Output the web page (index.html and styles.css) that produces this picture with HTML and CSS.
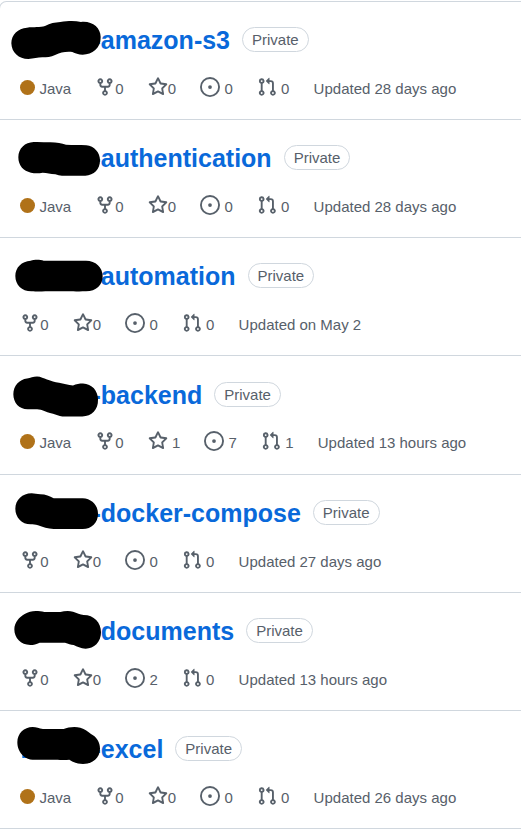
FILE: index.html
```
<!DOCTYPE html>
<html lang="en">
<head>
<meta charset="utf-8">
<title>Repositories</title>
<link rel="stylesheet" href="styles.css">
</head>
<body>
<svg class="sprite" aria-hidden="true">
  <symbol id="fork" viewBox="0 0 16 16"><path d="M5 5.372v.878c0 .414.336.75.75.75h4.5a.75.75 0 0 0 .75-.75v-.878a2.25 2.25 0 1 1 1.5 0v.878a2.25 2.25 0 0 1-2.25 2.25h-1.5v2.128a2.251 2.251 0 1 1-1.5 0V8.5h-1.5A2.25 2.25 0 0 1 3.5 6.25v-.878a2.25 2.25 0 1 1 1.5 0ZM5 3.25a.75.75 0 1 0-1.5 0 .75.75 0 0 0 1.5 0Zm6.75.75a.75.75 0 1 0 0-1.5.75.75 0 0 0 0 1.5Zm-3 8.75a.75.75 0 1 0-1.5 0 .75.75 0 0 0 1.5 0Z"/></symbol>
  <symbol id="star" viewBox="0 0 16 16"><path d="M8 .25a.75.75 0 0 1 .673.418l1.882 3.815 4.21.612a.75.75 0 0 1 .416 1.279l-3.046 2.97.719 4.192a.751.751 0 0 1-1.088.791L8 12.347l-3.766 1.98a.75.75 0 0 1-1.088-.79l.72-4.194L.818 6.374a.75.75 0 0 1 .416-1.28l4.21-.611L7.327.668A.75.75 0 0 1 8 .25Zm0 2.445L6.615 5.5a.75.75 0 0 1-.564.41l-3.097.45 2.24 2.184a.75.75 0 0 1 .216.664l-.528 3.084 2.769-1.456a.75.75 0 0 1 .698 0l2.77 1.456-.53-3.084a.75.75 0 0 1 .216-.664l2.24-2.183-3.096-.45a.75.75 0 0 1-.564-.41L8 2.694Z"/></symbol>
  <symbol id="issue" viewBox="0 0 16 16"><path d="M8 9.5a1.5 1.5 0 1 0 0-3 1.5 1.5 0 0 0 0 3Z"/><path d="M8 0a8 8 0 1 1 0 16A8 8 0 0 1 8 0ZM1.5 8a6.5 6.5 0 1 0 13 0 6.5 6.5 0 0 0-13 0Z"/></symbol>
  <symbol id="pull" viewBox="0 0 16 16"><path d="M1.5 3.25a2.25 2.25 0 1 1 3 2.122v5.256a2.251 2.251 0 1 1-1.5 0V5.372A2.25 2.25 0 0 1 1.5 3.25Zm5.677-.177L9.573.677A.25.25 0 0 1 10 .854V2.5h1A2.5 2.5 0 0 1 13.5 5v5.628a2.251 2.251 0 1 1-1.5 0V5a1 1 0 0 0-1-1h-1v1.646a.25.25 0 0 1-.427.177L7.177 3.427a.25.25 0 0 1 0-.354ZM3.75 2.5a.75.75 0 1 0 0 1.5.75.75 0 0 0 0-1.5Zm0 9.5a.75.75 0 1 0 0 1.5.75.75 0 0 0 0-1.5Zm8.25.75a.75.75 0 1 0 1.5 0 .75.75 0 0 0-1.5 0Z"/></symbol>
</svg>
<ul class="repos">
  <li class="repo">
    <svg class="mask" viewBox="-1 6 330 180"><path d="M33 130C33 103 53 85 80 83C100 80 120 83 134 78C150 70 163 67 180 66C205 62 225 62 242 66C275 62 301 83 301 111C302 144 275 164 247 164C235 164 224 160 216 156C195 154 180 158 166 164C150 171 140 172 126 172C112 173 100 176 84 177C55 177 34 158 33 130Z"/></svg>
    <h3 class="title"><a class="name"><span class="prefix">-</span>amazon-s3</a><span class="badge">Private</span></h3>
    <div class="stats"><span class="stat lang"><i class="dot"></i><span>Java</span></span><span class="stat"><svg><use href="#fork"/></svg><span>0</span></span><span class="stat"><svg><use href="#star"/></svg><span>0</span></span><span class="stat spaced"><svg><use href="#issue"/></svg><span>0</span></span><span class="stat spaced"><svg><use href="#pull"/></svg><span>0</span></span><span class="stat"><span>Updated 28 days ago</span></span></div>
  </li>
  <li class="repo">
    <svg class="mask" viewBox="-1 0 330 180"><path d="M54 112C54 85 74 67 100 66C118 65 133 67 150 67C170 67 184 70 197 74C218 76 238 74 258 76C282 78 299 98 299 121C299 149 281 166 255 167H185C178 167 172 165 165 163C150 161 140 159 127 158C115 160 103 160 92 158C69 154 54 136 54 112Z"/></svg>
    <h3 class="title"><a class="name"><span class="prefix">-</span>authentication</a><span class="badge">Private</span></h3>
    <div class="stats"><span class="stat lang"><i class="dot"></i><span>Java</span></span><span class="stat"><svg><use href="#fork"/></svg><span>0</span></span><span class="stat"><svg><use href="#star"/></svg><span>0</span></span><span class="stat spaced"><svg><use href="#issue"/></svg><span>0</span></span><span class="stat spaced"><svg><use href="#pull"/></svg><span>0</span></span><span class="stat"><span>Updated 28 days ago</span></span></div>
  </li>
  <li class="repo">
    <svg class="mask" viewBox="-1 10 330 180"><path d="M45 124C45 98 64 80 91 78C102 74 119 74 130 78H257C286 78 307 98 307 124C307 151 288 170 257 170C235 171 220 170 200 170H135C120 171 110 171 93 170C64 170 45 150 45 124Z"/></svg>
    <h3 class="title"><a class="name"><span class="prefix">-</span>automation</a><span class="badge">Private</span></h3>
    <div class="stats"><span class="stat"><svg><use href="#fork"/></svg><span>0</span></span><span class="stat"><svg><use href="#star"/></svg><span>0</span></span><span class="stat spaced"><svg><use href="#issue"/></svg><span>0</span></span><span class="stat spaced"><svg><use href="#pull"/></svg><span>0</span></span><span class="stat"><span>Updated on May 2</span></span></div>
  </li>
  <li class="repo">
    <svg class="mask" viewBox="-1 4.5 330 180"><path d="M39 116C39 91 57 72 80 69C91 67 98 63 110 63C122 63 130 69 140 72C153 76 163 80 176 82C190 84 204 90 218 90C228 86 237 84 248 84C275 85 293 106 293 132C294 163 274 182 246 183H186C176 182 167 178 158 175C145 172 137 168 126 164C120 161 112 161 105 161H82C56 161 39 141 39 116Z"/></svg>
    <h3 class="title"><a class="name"><span class="prefix">-</span>backend</a><span class="badge">Private</span></h3>
    <div class="stats"><span class="stat lang"><i class="dot"></i><span>Java</span></span><span class="stat"><svg><use href="#fork"/></svg><span>0</span></span><span class="stat spaced"><svg><use href="#star"/></svg><span>1</span></span><span class="stat spaced"><svg><use href="#issue"/></svg><span>7</span></span><span class="stat spaced"><svg><use href="#pull"/></svg><span>1</span></span><span class="stat"><span>Updated 13 hours ago</span></span></div>
  </li>
  <li class="repo">
    <svg class="mask" viewBox="-1 -1 330 180"><path d="M45 100C45 74 66 54 94 54C103 54 110 57 120 57C136 57 148 63 160 69H247C275 70 293 91 293 115C293 142 274 161 247 161H160C143 161 127 155 113 150C105 147 98 147 91 147C64 147 45 126 45 100Z"/></svg>
    <h3 class="title"><a class="name"><span class="prefix">-</span>docker-compose</a><span class="badge">Private</span></h3>
    <div class="stats"><span class="stat"><svg><use href="#fork"/></svg><span>0</span></span><span class="stat"><svg><use href="#star"/></svg><span>0</span></span><span class="stat spaced"><svg><use href="#issue"/></svg><span>0</span></span><span class="stat spaced"><svg><use href="#pull"/></svg><span>0</span></span><span class="stat"><span>Updated 27 days ago</span></span></div>
  </li>
  <li class="repo">
    <svg class="mask" viewBox="-1 3 330 180"><path d="M42 112C42 91 57 75 73 66C85 58 99 56 113 57C122 58 130 60 138 60H180C192 57 206 56 218 59C230 62 239 68 250 69C281 69 302 92 302 121C302 151 281 170 256 170C241 170 230 163 220 159C211 157 204 156 194 152H118C108 156 100 159 90 159C61 159 42 138 42 112Z"/></svg>
    <h3 class="title"><a class="name"><span class="prefix">-</span>documents</a><span class="badge">Private</span></h3>
    <div class="stats"><span class="stat"><svg><use href="#fork"/></svg><span>0</span></span><span class="stat"><svg><use href="#star"/></svg><span>0</span></span><span class="stat spaced"><svg><use href="#issue"/></svg><span>2</span></span><span class="stat spaced"><svg><use href="#pull"/></svg><span>0</span></span><span class="stat"><span>Updated 13 hours ago</span></span></div>
  </li>
  <li class="repo">
    <svg class="mask" viewBox="-1 6 330 180"><path class="peek" d="M66 130H78V147H66Z"/><path d="M51 100C51 73 71 54 97 54C108 54 116 59 128 60H190C203 54 225 52 240 56C254 60 263 68 272 75C289 84 299 99 299 119C299 146 277 165 248 165C231 165 218 159 207 152C190 154 180 152 165 152H100C89 153 79 149 70 142C57 131 51 116 51 100Z"/></svg>
    <h3 class="title"><a class="name"><span class="prefix">-</span>excel</a><span class="badge">Private</span></h3>
    <div class="stats"><span class="stat lang"><i class="dot"></i><span>Java</span></span><span class="stat"><svg><use href="#fork"/></svg><span>0</span></span><span class="stat"><svg><use href="#star"/></svg><span>0</span></span><span class="stat spaced"><svg><use href="#issue"/></svg><span>0</span></span><span class="stat spaced"><svg><use href="#pull"/></svg><span>0</span></span><span class="stat"><span>Updated 26 days ago</span></span></div>
  </li>
</ul>
</body>
</html>
```
FILE: styles.css
```
* { box-sizing: border-box; }
html { overflow: hidden; }
body {
  margin: 0;
  padding-top: 0.85px;
  background: #fff;
  color: #57606a;
  font: 15px/20px "Liberation Sans", Arial, sans-serif;
  overflow: hidden;
}
.sprite { display: none; }
.repos {
  list-style: none;
  margin: 0 -12px 0 -1px;
  padding: 0;
  border: 1px solid #d0d7de;
  border-bottom: 0;
  border-radius: 7.5px 7.5px 0 0;
}
.repo {
  position: relative;
  height: 118.2px;
  padding: 20.2px 20px 0;
  border-bottom: 1px solid #d0d7de;
}
/* Scribble laid over the hidden part of each name */
.mask {
  position: absolute;
  left: 0;
  top: 0.1px;
  width: 110px;
  height: 60px;
}
.peek { fill: #0969da; }
.title {
  display: flex;
  align-items: center;
  gap: 12px;
  margin: 0;
  height: 37.5px;
  font-size: 25px;
  line-height: 37.5px;
}
.name { display: flex; color: #0969da; font-weight: 700; }
.prefix { width: 80.8px; text-align: right; }
.badge {
  height: 25px;
  margin-bottom: 2.4px;
  padding: 0 9px;
  border: 1px solid #d0d7de;
  border-radius: 13px;
  font-size: 15px;
  font-weight: 400;
  line-height: 23px;
}
.stats {
  display: flex;
  gap: 24.17px;
  margin-top: 17.3px;
  padding-left: 0.3px;
  height: 22px;
  white-space: nowrap;
}
.stat { display: flex; align-items: flex-start; }
.stat > span { padding-top: 2px; }
.stat svg { width: 20px; height: 20px; fill: #57606a; }
.spaced { gap: 4.17px; }
.lang { gap: 4.17px; }
.dot {
  width: 15px;
  height: 15px;
  margin-top: 3px;
  border-radius: 50%;
  background: #b07219;
}
```
